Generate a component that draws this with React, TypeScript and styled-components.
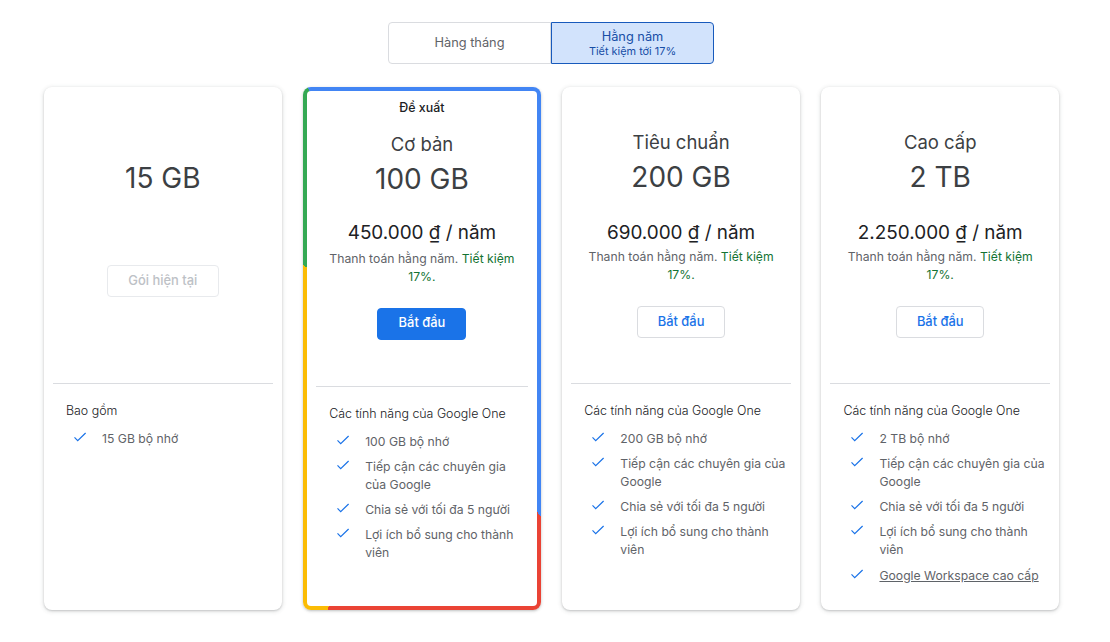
import React from 'react';
import styled, { createGlobalStyle } from 'styled-components';

const GlobalStyle = createGlobalStyle`
  html, body {
    margin: 0;
    padding: 0;
    background: #fff;
    font-family: 'Inter', 'Roboto', sans-serif;
  }
  * { box-sizing: border-box; }
`;

const Page = styled.div`
  width: 1110px;
  height: 642px;
  padding: 22px 51px 0 44px;
  overflow: hidden;
`;

const Toggle = styled.div`
  display: flex;
  justify-content: center;
  margin: 0 0 23px -1px;
`;

const ToggleOption = styled.button<{ $active?: boolean }>`
  width: 163px;
  height: 42px;
  padding: 0;
  font-family: inherit;
  display: flex;
  flex-direction: column;
  align-items: center;
  justify-content: center;
  cursor: pointer;
  background: ${(p) => (p.$active ? '#d2e3fc' : '#fff')};
  color: ${(p) => (p.$active ? '#174ea6' : '#5f6368')};
  border: 1px solid ${(p) => (p.$active ? '#185abc' : '#dadce0')};
  border-radius: ${(p) => (p.$active ? '0 4px 4px 0' : '4px 0 0 4px')};
  font-size: 12.8px;
  line-height: 16px;
`;

const ToggleNote = styled.span`
  font-size: 10.9px;
  line-height: 13px;
`;

const Cards = styled.div`
  display: grid;
  grid-template-columns: repeat(4, 1fr);
  gap: 21.6px;
`;

const Card = styled.section<{ $featured?: boolean }>`
  height: 523px;
  border-radius: 8px;
  text-align: center;
  ${(p) =>
    p.$featured
      ? `
    border: 4px solid transparent;
    background:
      linear-gradient(#fff, #fff) padding-box,
      conic-gradient(#4285f4 0deg 144.8deg, #ea4335 144.8deg 199.9deg, #fbbc04 199.9deg 305.1deg, #34a853 305.1deg 336.4deg, #4285f4 336.4deg) border-box;
    box-shadow: 0 1px 2px rgba(60, 64, 67, 0.2), 0 1px 3px 1px rgba(60, 64, 67, 0.1);
  `
      : `
    background: #fff;
    box-shadow: 0 1px 2px rgba(60, 64, 67, 0.22), 0 1px 4px 1px rgba(60, 64, 67, 0.12);
  `}
`;

const Recommended = styled.div`
  padding-top: 8px;
  margin-bottom: 13px;
  font-size: 12.4px;
  line-height: 18px;
  font-weight: 500;
  color: #202124;
`;

const PlanName = styled.h2`
  margin: 0;
  padding-top: 41px;
  font-size: 18.5px;
  line-height: 28px;
  font-weight: 400;
  color: #3c4043;
`;

const FeaturedName = styled(PlanName)`
  padding-top: 0;
`;

const Size = styled.div<{ $first?: boolean }>`
  margin-top: ${(p) => (p.$first ? '73px' : '3px')};
  font-size: 28px;
  line-height: 36px;
  font-weight: 400;
  color: #3c4043;
`;

const Price = styled.div<{ $featured?: boolean }>`
  margin-top: ${(p) => (p.$featured ? '24px' : '26px')};
  font-size: 18.9px;
  line-height: 24px;
  color: #202124;
`;

const Billing = styled.p<{ $featured?: boolean }>`
  margin: ${(p) => (p.$featured ? '5px' : '3px')} 20px 0;
  font-size: 12.2px;
  line-height: 18px;
  color: #5f6368;
`;

const Saving = styled.span`
  color: #137333;
`;

const ActionButton = styled.button<{ $variant: 'primary' | 'outline' | 'current' }>`
  display: block;
  height: 32px;
  margin: ${(p) => (p.$variant === 'current' ? '69px' : '22px')} auto 0;
  width: ${(p) => (p.$variant === 'current' ? '112px' : p.$variant === 'primary' ? '89px' : '88px')};
  padding: 0 0 ${(p) => (p.$variant === 'primary' ? '3px' : '2px')};
  border-radius: 4px;
  font-family: inherit;
  font-size: 12.9px;
  font-weight: 500;
  cursor: pointer;
  background: ${(p) => (p.$variant === 'primary' ? '#1a73e8' : '#fff')};
  color: ${(p) =>
    p.$variant === 'primary' ? '#fff' : p.$variant === 'current' ? '#bdc1c6' : '#1a73e8'};
  border: 1px solid
    ${(p) =>
      p.$variant === 'primary' ? '#1a73e8' : p.$variant === 'current' ? '#e8eaed' : '#dadce0'};
`;

const Divider = styled.hr<{ $gap: number }>`
  margin: ${(p) => p.$gap}px 9px 0;
  border: 0;
  border-top: 1px solid #dadce0;
`;

const Features = styled.div`
  padding: 18px 12px 0 22px;
  text-align: left;
`;

const FeaturesTitle = styled.div`
  font-size: 12.4px;
  line-height: 18px;
  font-weight: 300;
  color: #202124;
`;

const FeatureList = styled.ul`
  list-style: none;
  margin: 10px 0 0;
  padding: 0;
  display: flex;
  flex-direction: column;
  gap: 7px;
`;

const FeatureItem = styled.li<{ $link?: boolean }>`
  display: flex;
  align-items: flex-start;
  gap: 15px;
  margin-top: ${(p) => (p.$link ? '1px' : '0')};
  padding-left: 7px;
  font-size: 12.2px;
  line-height: 18px;
  color: #5f6368;
`;

const CheckIcon = styled.svg`
  flex: none;
  width: 14px;
  height: 14px;
  fill: none;
  stroke: #1a73e8;
  stroke-width: 1.2;
`;

const FeatureLink = styled.a`
  color: #5f6368;
  text-decoration: underline;
`;

const Check = () => (
  <CheckIcon viewBox="0 0 14 14">
    <path d="M1.5 7.4l3.2 3.2L12.6 3" />
  </CheckIcon>
);

const featureSet = (size: string) => [
  `${size} bộ nhớ`,
  'Tiếp cận các chuyên gia của Google',
  'Chia sẻ với tối đa 5 người',
  'Lợi ích bổ sung cho thành viên',
];

const FeatureBlock: React.FC<{ title: string; items: string[]; link?: string }> = ({ title, items, link }) => (
  <Features>
    <FeaturesTitle>{title}</FeaturesTitle>
    <FeatureList>
      {items.map((item) => (
        <FeatureItem key={item}>
          <Check />
          <span>{item}</span>
        </FeatureItem>
      ))}
      {link && (
        <FeatureItem $link>
          <Check />
          <FeatureLink href="#">{link}</FeatureLink>
        </FeatureItem>
      )}
    </FeatureList>
  </Features>
);

const BillingText = ({ featured }: { featured?: boolean }) => (
  <Billing $featured={featured}>
    Thanh toán hằng năm. <Saving>Tiết kiệm 17%.</Saving>
  </Billing>
);

const plans = [
  { name: 'Tiêu chuẩn', size: '200 GB', price: '690.000 ₫ / năm' },
  { name: 'Cao cấp', size: '2 TB', price: '2.250.000 ₫ / năm', link: 'Google Workspace cao cấp' },
];

export default function App() {
  return (
    <Page>
      <GlobalStyle />
      <Toggle>
        <ToggleOption>Hàng tháng</ToggleOption>
        <ToggleOption $active>
          Hằng năm
          <ToggleNote>Tiết kiệm tới 17%</ToggleNote>
        </ToggleOption>
      </Toggle>
      <Cards>
        <Card>
          <Size $first>15 GB</Size>
          <ActionButton $variant="current">Gói hiện tại</ActionButton>
          <Divider $gap={86} />
          <FeatureBlock title="Bao gồm" items={['15 GB bộ nhớ']} />
        </Card>
        <Card $featured>
          <Recommended>Đề xuất</Recommended>
          <FeaturedName>Cơ bản</FeaturedName>
          <Size>100 GB</Size>
          <Price $featured>450.000 ₫ / năm</Price>
          <BillingText featured />
          <ActionButton $variant="primary">Bắt đầu</ActionButton>
          <Divider $gap={46} />
          <FeatureBlock title="Các tính năng của Google One" items={featureSet('100 GB')} />
        </Card>
        {plans.map((plan) => (
          <Card key={plan.name}>
            <PlanName>{plan.name}</PlanName>
            <Size>{plan.size}</Size>
            <Price>{plan.price}</Price>
            <BillingText />
            <ActionButton $variant="outline">Bắt đầu</ActionButton>
            <Divider $gap={45} />
            <FeatureBlock
              title="Các tính năng của Google One"
              items={featureSet(plan.size)}
              link={plan.link}
            />
          </Card>
        ))}
      </Cards>
    </Page>
  );
}
